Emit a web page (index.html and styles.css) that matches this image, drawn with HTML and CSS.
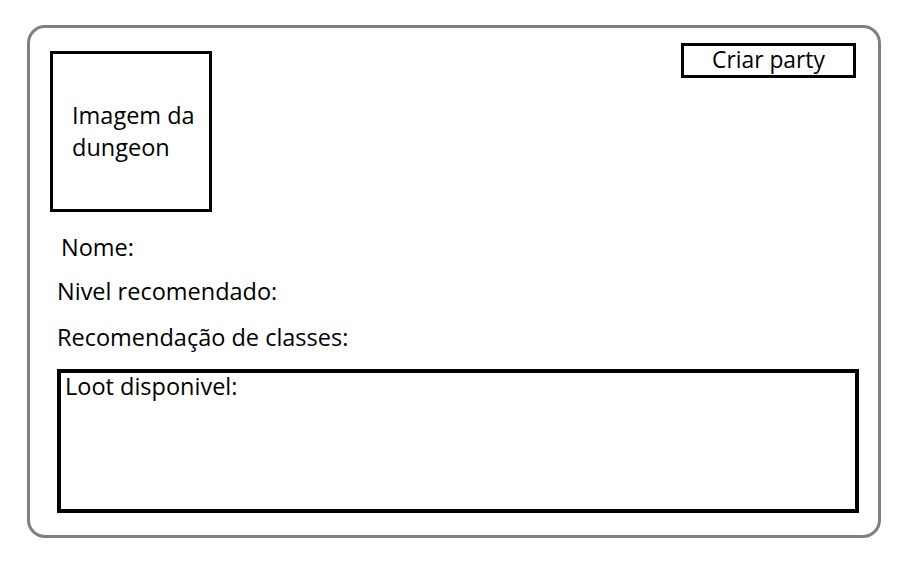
FILE: index.html
```html
<!DOCTYPE html>
<html lang="pt">
<head>
<meta charset="utf-8">
<title>Dungeon</title>
<link rel="stylesheet" href="styles.css">
</head>
<body>
<div class="page">
  <div class="card">
    <div class="top-row">
      <div class="image-box">
        <span class="image-text">Imagem da dungeon</span>
      </div>
      <button class="party-btn">Criar party</button>
    </div>
    <div class="label label-name">Nome:</div>
    <div class="label label-level">Nivel recomendado:</div>
    <div class="label label-classes">Recomendação de classes:</div>
    <div class="loot-box">
      <div class="loot-title">Loot disponivel:</div>
    </div>
  </div>
</div>
</body>
</html>
```
FILE: styles.css
```css
* { box-sizing: border-box; }
html, body {
  margin: 0;
  padding: 0;
  background: #ffffff;
}
body {
  font-family: "Open Sans", "Noto Sans", sans-serif;
  color: #000000;
  font-size: 23.5px;
}
.page {
  padding: 25px 0 0 27px;
}
.card {
  width: 854px;
  height: 513px;
  border: 3px solid #808080;
  border-radius: 18px;
  padding: 15px 19px 0 20px;
  display: flex;
  flex-direction: column;
}
.top-row {
  display: flex;
  align-items: flex-start;
  justify-content: space-between;
}
.image-box {
  width: 162px;
  height: 161px;
  border: 3px solid #000;
  margin-top: 8px;
  padding: 45px 2px 0 19px;
  line-height: 32px;
}
.party-btn {
  width: 175px;
  height: 35px;
  margin-right: 3px;
  border: 3px solid #000;
  background: #fff;
  font-family: inherit;
  font-size: 22.8px;
  line-height: 28px;
  padding: 0 0 2px 0;
  color: #000;
}
.label {
  line-height: 24px;
}
.label-name { margin: 23px 0 0 11px; }
.label-level { margin: 20px 0 0 7px; }
.label-classes { margin: 22px 0 0 7px; }
.loot-box {
  width: 802px;
  height: 144px;
  margin: 20px 0 0 7px;
  border: 4px solid #000;
  padding: 1px 0 0 4px;
}
.loot-title {
  line-height: 24px;
}
```
